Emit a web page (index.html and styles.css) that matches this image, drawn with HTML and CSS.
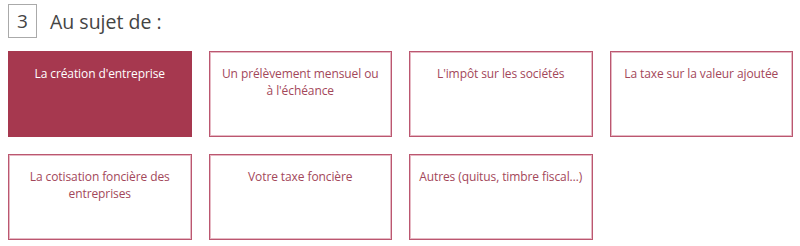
FILE: index.html
```html
<!DOCTYPE html>
<html lang="fr">
<head>
<meta charset="utf-8">
<link rel="stylesheet" href="styles.css">
</head>
<body>
<div class="step">
  <span class="step-num">3</span>
  <h2 class="step-title">Au sujet de :</h2>
</div>
<div class="choices">
  <div class="choice active">La création d'entreprise</div>
  <div class="choice">Un prélèvement mensuel ou à l'échéance</div>
  <div class="choice">L'impôt sur les sociétés</div>
  <div class="choice">La taxe sur la valeur ajoutée</div>
  <div class="choice">La cotisation foncière des entreprises</div>
  <div class="choice">Votre taxe foncière</div>
  <div class="choice">Autres (quitus, timbre fiscal…)</div>
</div>
</body>
</html>
```
FILE: styles.css
```css
body {
  margin: 0;
  padding: 4px 7px 0 8px;
  font-family: "Open Sans", "Liberation Sans", sans-serif;
  background: #fff;
}
.step {
  display: flex;
  align-items: center;
  gap: 13px;
  height: 34px;
}
.step-num {
  box-sizing: border-box;
  width: 29px;
  height: 34px;
  border: 1px solid #aaa;
  display: flex;
  align-items: center;
  justify-content: center;
  font-size: 19px;
  color: #444;
}
.step-title {
  margin: 0;
  font-weight: 400;
  font-size: 19.5px;
  color: #444;
}
.choices {
  margin-top: 13px;
  display: grid;
  grid-template-columns: repeat(4, 1fr);
  gap: 17px;
}
.choice {
  box-sizing: border-box;
  height: 86px;
  padding: 13px 8px 0;
  border: 1px solid #bb5770;
  box-shadow: inset 0 0 0 1px #e6b9c4;
  text-align: center;
  font-size: 12px;
  letter-spacing: -0.1px;
  line-height: 17px;
  color: #a3475a;
}
.choice.active {
  background: #a6384f;
  border-color: #a6384f;
  box-shadow: none;
  color: #fff;
}
```
